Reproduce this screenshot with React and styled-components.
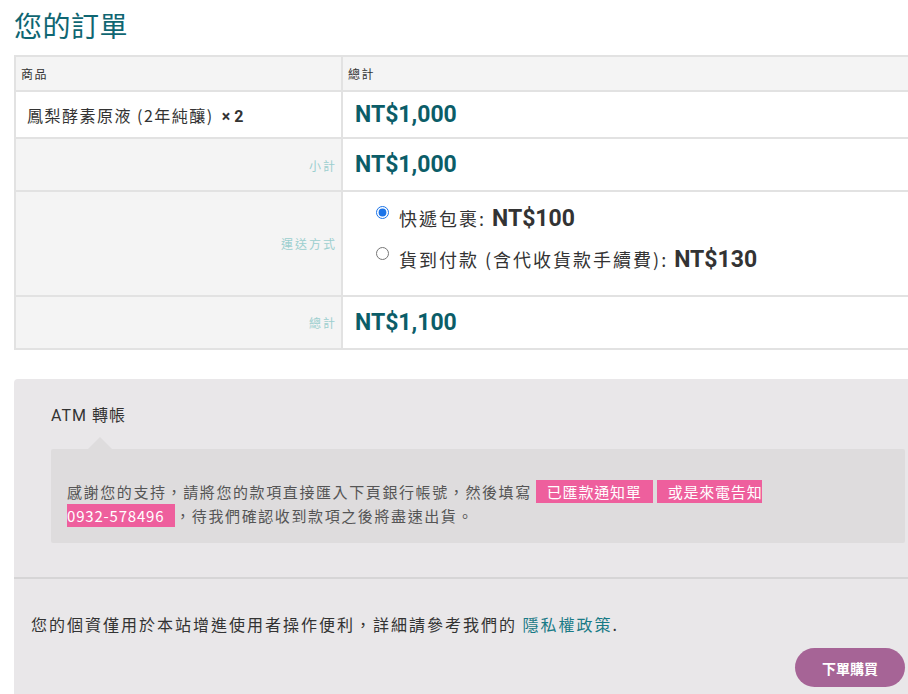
import React, { useState } from 'react';
import styled, { createGlobalStyle } from 'styled-components';

const GlobalStyle = createGlobalStyle`
  html, body {
    margin: 0;
    padding: 0;
    background: #fff;
    overflow: hidden;
  }
  body {
    font-family: Roboto, "Noto Sans CJK TC", sans-serif;
    color: #333;
  }
`;

const Page = styled.div`
  width: 928px;
  padding-left: 14px;
`;

const Title = styled.h2`
  margin: 0;
  padding: 6px 0 0 0;
  height: 55px;
  box-sizing: border-box;
  font-family: "Noto Sans CJK TC", serif;
  font-weight: 400;
  font-size: 28px;
  letter-spacing: 0.5px;
  line-height: 38px;
  color: #0f6672;
`;

const Table = styled.table`
  width: 100%;
  border-collapse: collapse;
  border: 2px solid #e2e2e2;
`;

const Cell = styled.td`
  border: 2px solid #e2e2e2;
  padding: 0;
  height: ${(p) => p.h}px;
  box-sizing: border-box;
  background: ${(p) => (p.shade ? '#f4f4f4' : '#fff')};
  vertical-align: middle;
  text-align: left;
  font-weight: 400;
  &:first-child {
    width: 327px;
  }
`;

const HeadText = styled.span`
  display: block;
  padding-left: 5px;
  font-size: 12px;
  letter-spacing: 1.5px;
  color: #333;
  font-family: "Noto Sans CJK TC", sans-serif;
`;

const Product = styled.div`
  padding-left: 11px;
  font-size: 16px;
  letter-spacing: 1.5px;
  color: #333;
  font-family: "Noto Sans CJK TC", sans-serif;
  b {
    font-family: Roboto, sans-serif;
    font-weight: 700;
    letter-spacing: 0;
    margin-left: 8px;
  }
`;

const Label = styled.div`
  text-align: right;
  padding-right: 4px;
  font-size: 12px;
  letter-spacing: 2px;
  color: #9ccfcf;
  font-family: "Noto Sans CJK TC", sans-serif;
  padding-top: ${(p) => p.down || 0}px;
`;

const Amount = styled.div`
  padding-left: 12px;
  font-family: Roboto, sans-serif;
  font-weight: 700;
  font-size: 23px;
  color: #0b5d68;
`;

const Options = styled.ul`
  list-style: none;
  margin: 0;
  padding: 0 0 10px 33px;
  display: flex;
  flex-direction: column;
  gap: 12px;
`;

const Option = styled.li`
  display: flex;
  align-items: flex-start;
  gap: 10px;
  font-family: "Noto Sans CJK TC", sans-serif;
  font-size: 18px;
  letter-spacing: 2px;
  line-height: 28px;
  color: #333;
  input {
    margin: 2px 0 0 0;
    width: 13px;
    height: 13px;
    accent-color: #1a73e8;
  }
  b {
    font-family: Roboto, sans-serif;
    font-weight: 700;
    font-size: 23px;
    letter-spacing: 0;
    margin-left: 6px;
  }
`;

const Payment = styled.section`
  margin-top: 29px;
  background: #e9e7e9;
  border-radius: 4px 4px 0 0;
  height: 320px;
`;

const Method = styled.div`
  padding: 26px 37px 0 37px;
`;

const MethodName = styled.div`
  font-family: Roboto, "Noto Sans CJK TC", sans-serif;
  font-size: 16px;
  letter-spacing: 1px;
  line-height: 22px;
  color: #333;
`;

const Notice = styled.div`
  position: relative;
  margin-top: 22px;
  background: #dedcdd;
  border-radius: 2px;
  padding: 31px 16px 15px 16px;
  font-family: "Noto Sans CJK TC", sans-serif;
  font-size: 15px;
  line-height: 24px;
  letter-spacing: 1.6px;
  color: #555;
  &::before {
    content: '';
    position: absolute;
    top: -12px;
    left: 37px;
    border-left: 12px solid transparent;
    border-right: 12px solid transparent;
    border-bottom: 12px solid #dedcdd;
  }
`;

const Mark = styled.span`
  background: #ee5f9d;
  color: #fff;
  letter-spacing: 0.8px;
  padding: 1px 11px;
  margin: 0 0 0 4px;
`;

const Divider = styled.hr`
  margin: 34px 0 0 0;
  border: none;
  border-top: 2px solid #d6d5d6;
`;

const Privacy = styled.p`
  margin: 0;
  padding: 33px 0 0 17px;
  font-family: "Noto Sans CJK TC", sans-serif;
  font-size: 16px;
  letter-spacing: 2px;
  line-height: 24px;
  color: #333;
  a {
    color: #197a86;
    text-decoration: none;
  }
`;

const Actions = styled.div`
  display: flex;
  justify-content: flex-end;
  padding: 12px 37px 0 0;
`;

const SubmitButton = styled.button`
  width: 110px;
  height: 39px;
  border: none;
  border-radius: 20px;
  background: #a66496;
  color: #fff;
  font-family: "Noto Sans CJK TC", sans-serif;
  font-weight: 700;
  font-size: 14px;
  cursor: pointer;
`;

const shipping = [
  { id: 'home', name: '快遞包裹:', price: 'NT$100' },
  { id: 'cod', name: '貨到付款 (含代收貨款手續費):', price: 'NT$130' },
];

const App = () => {
  const [method, setMethod] = useState('home');

  return (
    <Page>
      <GlobalStyle />
      <Title>您的訂單</Title>
      <Table>
        <thead>
          <tr>
            <Cell as="th" h={35} shade>
              <HeadText>商品</HeadText>
            </Cell>
            <Cell as="th" h={35} shade>
              <HeadText>總計</HeadText>
            </Cell>
          </tr>
        </thead>
        <tbody>
          <tr>
            <Cell h={47}>
              <Product>
                鳳梨酵素原液 (2年純釀)<b>× 2</b>
              </Product>
            </Cell>
            <Cell h={47}>
              <Amount>NT$1,000</Amount>
            </Cell>
          </tr>
          <tr>
            <Cell h={53} shade>
              <Label down={2}>小計</Label>
            </Cell>
            <Cell h={53}>
              <Amount>NT$1,000</Amount>
            </Cell>
          </tr>
          <tr>
            <Cell h={105} shade>
              <Label>運送方式</Label>
            </Cell>
            <Cell h={105}>
              <Options>
                {shipping.map((s) => (
                  <Option key={s.id}>
                    <input
                      type="radio"
                      name="shipping"
                      checked={method === s.id}
                      onChange={() => setMethod(s.id)}
                    />
                    <span>
                      {s.name}
                      <b>{s.price}</b>
                    </span>
                  </Option>
                ))}
              </Options>
            </Cell>
          </tr>
          <tr>
            <Cell h={53} shade>
              <Label>總計</Label>
            </Cell>
            <Cell h={53}>
              <Amount>NT$1,100</Amount>
            </Cell>
          </tr>
        </tbody>
      </Table>

      <Payment>
        <Method>
          <MethodName>ATM 轉帳</MethodName>
          <Notice>
            感謝您的支持，請將您的款項直接匯入下頁銀行帳號，然後填寫
            <Mark>已匯款通知單</Mark>
            <Mark>
              或是來電告知
              <br />
              0932-578496
            </Mark>
            ，待我們確認收到款項之後將盡速出貨。
          </Notice>
        </Method>
        <Divider />
        <Privacy>
          您的個資僅用於本站增進使用者操作便利，詳細請參考我們的 <a href="#">隱私權政策</a>.
        </Privacy>
        <Actions>
          <SubmitButton>下單購買</SubmitButton>
        </Actions>
      </Payment>
    </Page>
  );
};

export default App;
